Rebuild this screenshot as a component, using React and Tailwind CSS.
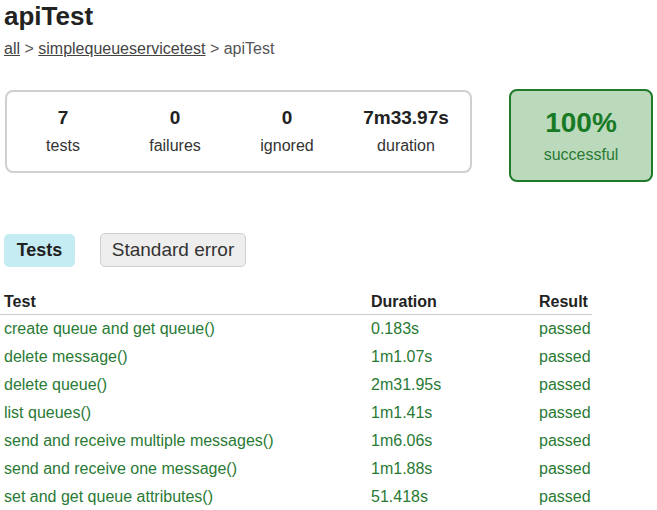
const stats = [
  { value: "7", label: "tests", w: "w-[112px]" },
  { value: "0", label: "failures", w: "w-[112px]" },
  { value: "0", label: "ignored", w: "w-[112px]" },
  { value: "7m33.97s", label: "duration", w: "w-[126px]" },
];

const tests = [
  ["create queue and get queue()", "0.183s"],
  ["delete message()", "1m1.07s"],
  ["delete queue()", "2m31.95s"],
  ["list queues()", "1m1.41s"],
  ["send and receive multiple messages()", "1m6.06s"],
  ["send and receive one message()", "1m1.88s"],
  ["set and get queue attributes()", "51.418s"],
];

const App = () => {
  return (
    <div className="w-[657px] h-[510px] overflow-hidden bg-white text-[#333] font-['Liberation_Sans',Arial,sans-serif]">
      <h1 className="pl-[4px] pt-[1px] text-[26px] leading-[30px] font-bold text-[#222]">apiTest</h1>

      <div className="pl-[4px] mt-[8px] text-[16px] leading-[20px] text-[#555]">
        <span className="underline text-[#444]">all</span> &gt;{" "}
        <span className="underline text-[#444]">simplequeueservicetest</span> &gt; apiTest
      </div>

      {/* Summary */}
      <div className="flex items-start mt-[31px] pl-[5px]">
        <div className="w-[467px] h-[83px] border-2 border-[#d0d0d0] rounded-[8px] flex items-center">
          {stats.map((s) => (
            <div key={s.label} className={`${s.w} flex flex-col items-center -mt-[2px]`}>
              <div className="text-[19px] leading-[24px] font-bold text-[#222]">{s.value}</div>
              <div className="text-[16px] leading-[20px] mt-[6px] text-[#333]">{s.label}</div>
            </div>
          ))}
        </div>
        <div className="ml-[37px] -mt-[1px] w-[144px] h-[93px] border-2 border-[#1f7a2a] bg-[#bbd9bb] rounded-[8px] flex flex-col items-center justify-center">
          <div className="text-[28px] leading-[32px] font-bold text-[#187a25]">100%</div>
          <div className="text-[16px] leading-[20px] mt-[6px] text-[#2a7a35]">successful</div>
        </div>
      </div>

      {/* Tabs */}
      <div className="flex items-center pl-[4px] mt-[51px] gap-[25px]">
        <div className="w-[71px] h-[33px] rounded-[5px] bg-[#c4ecf2] flex items-center justify-center text-[18px] font-bold text-[#222]">
          Tests
        </div>
        <div className="w-[146px] h-[34px] rounded-[5px] bg-[#eeeeee] border border-[#cfcfcf] flex items-center justify-center text-[19px] text-[#333]">
          Standard error
        </div>
      </div>

      {/* Table */}
      <table className="mt-[23px] w-[592px] text-[16px] border-collapse">
        <thead>
          <tr className="border-b border-[#cccccc]">
            <th className="text-left font-bold text-[#222] pl-[4px] h-[20px] w-[371px] align-bottom pb-0">Test</th>
            <th className="text-left font-bold text-[#222] w-[168px] align-bottom pb-0">Duration</th>
            <th className="text-left font-bold text-[#222] align-bottom pb-0">Result</th>
          </tr>
        </thead>
        <tbody>
          {tests.map(([name, dur]) => (
            <tr key={name} className="h-[28px] text-[#2a7a35]">
              <td className="pl-[4px]">{name}</td>
              <td>{dur}</td>
              <td>passed</td>
            </tr>
          ))}
        </tbody>
      </table>
    </div>
  );
};

export default App;
